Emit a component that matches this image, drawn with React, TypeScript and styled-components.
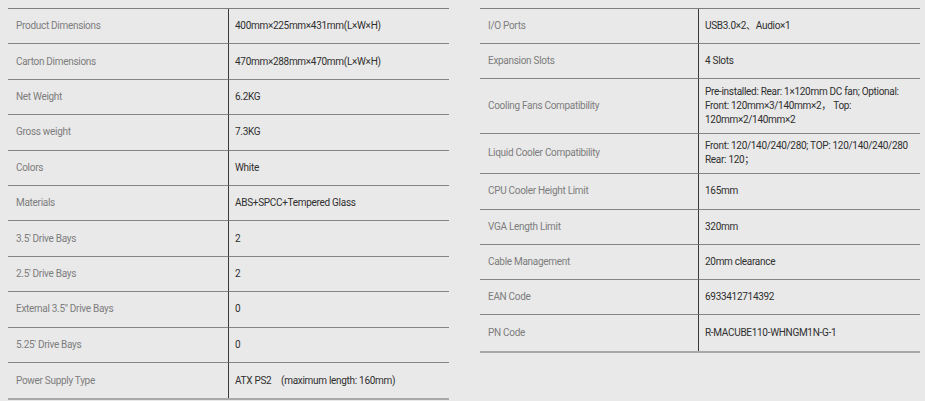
import React from "react";
import styled, { createGlobalStyle } from "styled-components";

const Global = createGlobalStyle`
  html, body { margin: 0; padding: 0; background: #e9e9e9; }
  body { font-family: Roboto, "Noto Sans CJK SC", "Liberation Sans", Arial, sans-serif; }
`;

const Page = styled.div`
  display: flex;
  align-items: flex-start;
  gap: 31px;
  padding: 8px 5px 0 8px;
  width: 925px;
  height: 401px;
  box-sizing: border-box;
  overflow: hidden;
`;

const Table = styled.div<{ $w: number; $split: number }>`
  width: ${(p) => p.$w}px;
  display: grid;
  grid-template-columns: ${(p) => p.$split}px 1fr;
  border-top: 1px solid #7e7e7e;
  border-bottom: 2px solid #a9a9a9;
`;

const Cell = styled.div<{ $h?: number; $last?: boolean }>`
  box-sizing: border-box;
  height: ${(p) => p.$h ?? 35.4}px;
  display: flex;
  align-items: center;
  font-size: 10px;
  letter-spacing: -0.3px;
  line-height: 14px;
  border-bottom: ${(p) => (p.$last ? "none" : "1px solid #858585")};
  white-space: nowrap;
`;

const Label = styled(Cell)`
  color: #7d7d7d;
  padding-left: 8px;
  border-right: 1px solid #3a3a3a;
`;

const Value = styled(Cell)`
  color: #2f2f2f;
  padding-left: 6px;
`;

type Row = { k: string; v: React.ReactNode; h?: number };

const left: Row[] = [
  { k: "Product Dimensions", v: "400mm×225mm×431mm(L×W×H)" },
  { k: "Carton Dimensions", v: "470mm×288mm×470mm(L×W×H)" },
  { k: "Net Weight", v: "6.2KG" },
  { k: "Gross weight", v: "7.3KG" },
  { k: "Colors", v: "White" },
  { k: "Materials", v: "ABS+SPCC+Tempered Glass" },
  { k: "3.5' Drive Bays", v: "2" },
  { k: "2.5' Drive Bays", v: "2" },
  { k: "External 3.5\" Drive Bays", v: "0" },
  { k: "5.25' Drive Bays", v: "0" },
  { k: "Power Supply Type", v: "ATX PS2\u3000(maximum length: 160mm)" },
];

const right: Row[] = [
  { k: "I/O Ports", v: "USB3.0×2、Audio×1", h: 35 },
  { k: "Expansion Slots", v: "4 Slots", h: 35 },
  {
    k: "Cooling Fans Compatibility",
    v: (
      <span>
        Pre-installed: Rear: 1×120mm DC fan; Optional:
        <br />
        Front: 120mm×3/140mm×2，&nbsp;Top:
        <br />
        120mm×2/140mm×2
      </span>
    ),
    h: 55,
  },
  {
    k: "Liquid Cooler Compatibility",
    v: (
      <span>
        Front: 120/140/240/280; TOP: 120/140/240/280
        <br />
        Rear: 120；
      </span>
    ),
    h: 39.5,
  },
  { k: "CPU Cooler Height Limit", v: "165mm", h: 36 },
  { k: "VGA Length Limit", v: "320mm", h: 35.5 },
  { k: "Cable Management", v: "20mm clearance", h: 35 },
  { k: "EAN Code", v: "6933412714392", h: 35 },
  { k: "PN Code", v: "R-MACUBE110-WHNGM1N-G-1", h: 35.5 },
];

function Spec({ rows, w, split }: { rows: Row[]; w: number; split: number }) {
  return (
    <Table $w={w} $split={split}>
      {rows.map((r, i) => (
        <React.Fragment key={r.k}>
          <Label $h={r.h} $last={i === rows.length - 1}>{r.k}</Label>
          <Value $h={r.h} $last={i === rows.length - 1}>{r.v}</Value>
        </React.Fragment>
      ))}
    </Table>
  );
}

export default function App() {
  return (
    <>
      <Global />
      <Page>
        <Spec rows={left} w={441} split={221} />
        <Spec rows={right} w={440} split={219} />
      </Page>
    </>
  );
}
